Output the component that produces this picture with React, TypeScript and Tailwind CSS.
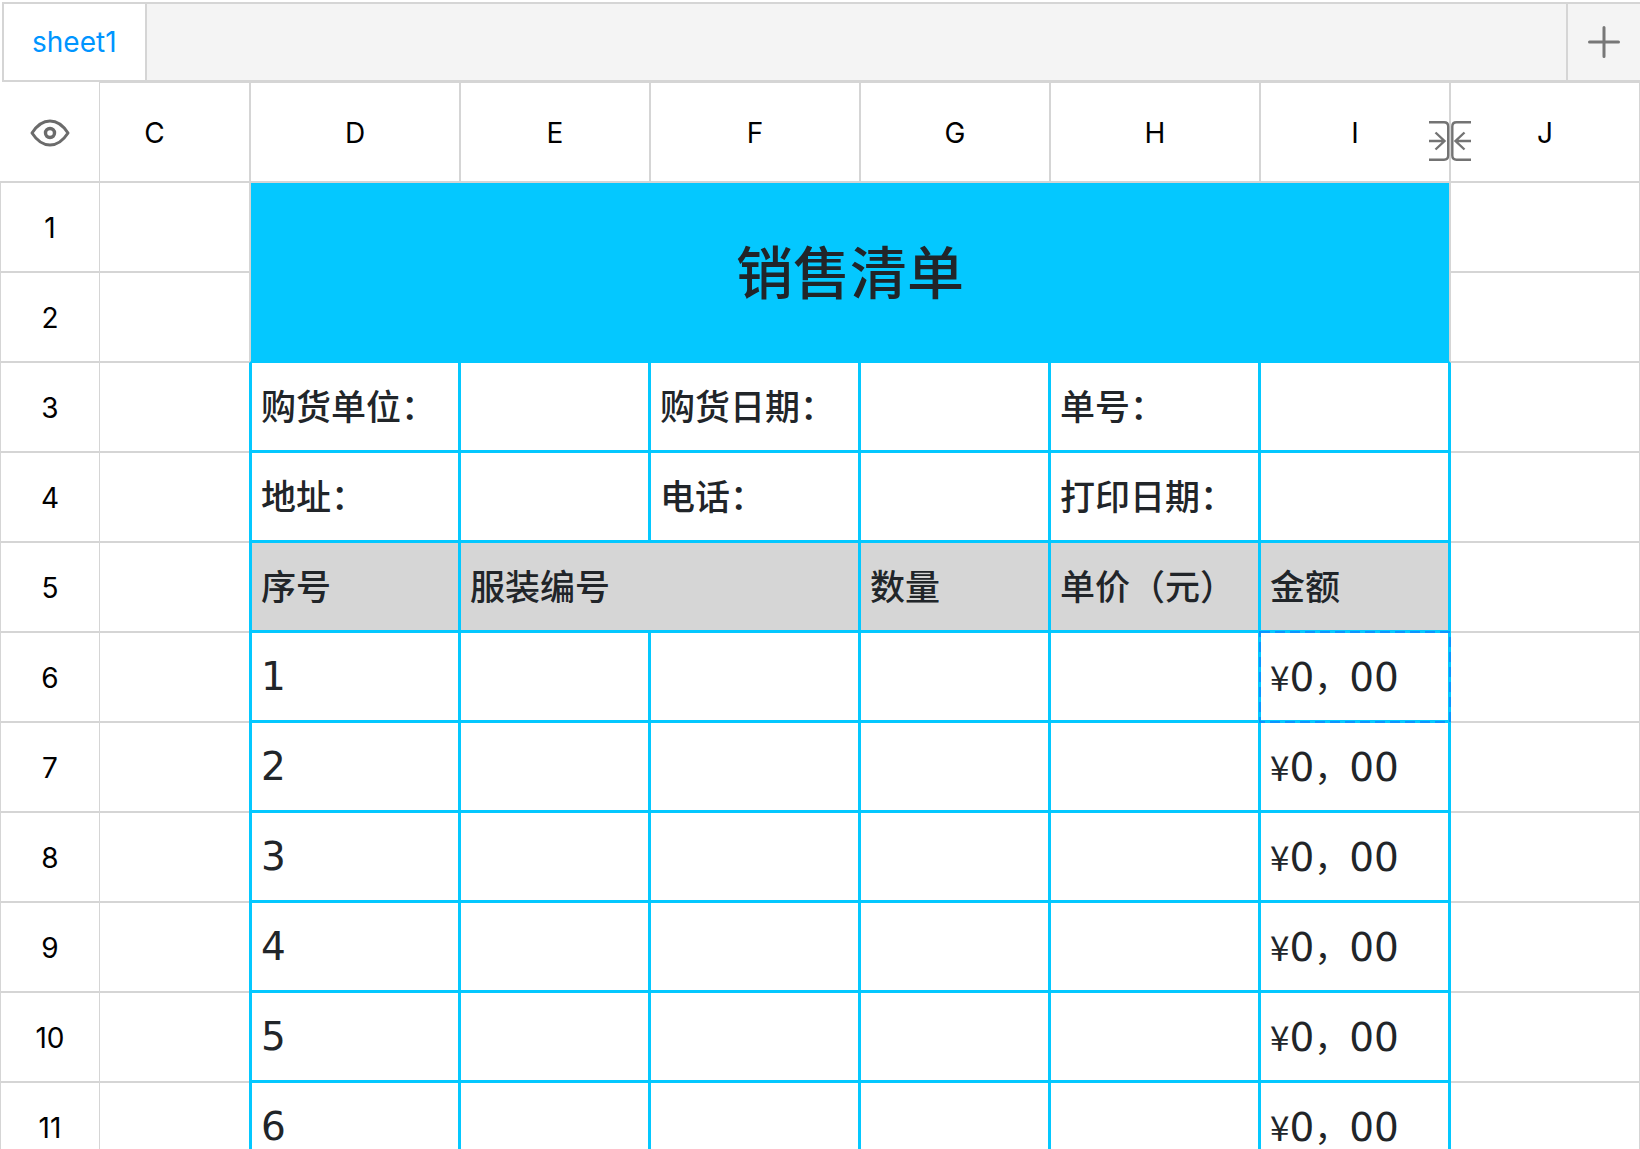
const columns = ["C", "D", "E", "F", "G", "H", "I", "J"];

const items = [1, 2, 3, 4, 5, 6];

const label =
  "border-r-[3px] border-b-[3px] border-[#04c8ff] p-0 pb-1 pl-[9px] text-left text-[35px] leading-10 font-medium whitespace-nowrap";
const head = `${label} bg-[#d6d6d6]`;
const cell =
  "relative border-r-[3px] border-b-[3px] border-[#04c8ff] p-0 pl-[9px] whitespace-nowrap";
const edge = "border-b-2 border-[#d5d5d5]";

function EyeIcon() {
  return (
    <svg width="40" height="28" viewBox="0 0 40 28" fill="none" stroke="#6b6b6b" strokeWidth="3">
      <path
        d="M2 14C6.500 7 12.500 2 20 2s13.500 5 18 12c-4.500 7-10.500 12-18 12S6.500 21 2 14Z"
        strokeLinejoin="round"
      />
      <circle cx="20" cy="14" r="4.500" strokeWidth="3.400" />
    </svg>
  );
}

function PlusIcon() {
  return (
    <svg width="32" height="32" viewBox="0 0 32 32" stroke="#777777" strokeWidth="3" strokeLinecap="round">
      <path d="M1.500 16h29M16 1.500v29" />
    </svg>
  );
}

function CollapseIcon() {
  return (
    <svg width="42" height="40" viewBox="0 0 42 40" fill="none" stroke="#737373" strokeWidth="2.400">
      <path d="M0 1.200H15Q19.200 1.200 19.200 5.400V34.600Q19.200 38.800 15 38.800H0" />
      <path d="M42 1.200H27.500Q23.300 1.200 23.300 5.400V34.600Q23.300 38.800 27.500 38.800H42" />
      <path d="M0 20H15.500M6.500 11.500L15.500 20L6.500 28.500" />
      <path d="M42 20H26.500M35.500 11.500L26.500 20L35.500 28.500" />
    </svg>
  );
}

function RowNumber({ n }: { n: number }) {
  return (
    <th
      scope="row"
      className="border-r border-b-2 border-l border-[#d5d5d5] p-0 pt-0.5 text-center font-['Inter',sans-serif] text-[28px] font-normal text-black"
    >
      {n}
    </th>
  );
}

function Amount() {
  return (
    <span className="flex items-baseline text-[35px] leading-10">
      ¥<span className="font-['DejaVu_Sans',sans-serif] text-[39px]">0</span>，
      <span className="font-['DejaVu_Sans',sans-serif] text-[39px]">00</span>
    </span>
  );
}

export default function App() {
  return (
    <div className="h-screen overflow-hidden bg-white pt-0.5 font-['Noto_Sans_CJK_SC',sans-serif] text-[#212529]">
      <div className="ml-0.5 flex h-20 border-y-2 border-l-2 border-[#d5d5d5] bg-[#f4f4f4] font-['Inter',sans-serif]">
        <button className="border-r-2 border-[#d5d5d5] bg-white px-7 text-[28px] text-[#0095ff]">
          sheet1
        </button>
        <button
          aria-label="Add sheet"
          className="ml-auto flex w-[74px] items-center justify-center border-l-2 border-[#d5d5d5]"
        >
          <PlusIcon />
        </button>
      </div>

      <table className="w-full table-fixed border-separate border-spacing-0">
        <colgroup>
          <col className="w-[100px]" />
          <col className="w-[149px]" />
          <col className="w-[212px]" />
          <col className="w-[190px]" />
          <col className="w-[210px]" />
          <col className="w-[190px]" />
          <col className="w-[210px]" />
          <col className="w-[190px]" />
          <col />
        </colgroup>
        <thead>
          <tr className="h-[101px] font-['Inter',sans-serif] text-[28px] text-black">
            <th className="border-r border-b-2 border-[#d5d5d5] p-0 pt-0.5">
              <button aria-label="Show hidden" className="flex w-full justify-center">
                <EyeIcon />
              </button>
            </th>
            {columns.map((name) => (
              <th
                key={name}
                scope="col"
                className={`relative border-t border-b-2 border-[#d5d5d5] p-0 pt-0.5 font-normal ${
                  name === "C" ? "pr-10" : name === "J" ? "border-r" : "border-r-2"
                } ${name === "D" ? "border-l-2" : ""}`}
              >
                {name}
                {name === "I" && (
                  <button
                    aria-label="Hidden columns"
                    className="absolute top-[38px] -right-[22px] z-10"
                  >
                    <CollapseIcon />
                  </button>
                )}
              </th>
            ))}
          </tr>
        </thead>
        <tbody>
          <tr className="h-[90px]">
            <RowNumber n={1} />
            <td className={edge} />
            <td
              colSpan={6}
              rowSpan={2}
              className="border-x-2 border-b-2 border-x-[#d5d5d5] border-b-[#04c8ff] bg-[#04c8ff] bg-clip-padding p-0 pb-1.5 text-center text-[57px] leading-[64px] font-medium"
            >
              销售清单
            </td>
            <td className={`${edge} border-r`} />
          </tr>
          <tr className="h-[90px]">
            <RowNumber n={2} />
            <td className={edge} />
            <td className={`${edge} border-r`} />
          </tr>
          <tr className="h-[90px]">
            <RowNumber n={3} />
            <td className={edge} />
            <td className={`${label} border-l-[3px]`}>购货单位：</td>
            <td className={cell} />
            <td className={label}>购货日期：</td>
            <td className={cell} />
            <td className={label}>单号：</td>
            <td className={cell} />
            <td className={`${edge} border-r`} />
          </tr>
          <tr className="h-[90px]">
            <RowNumber n={4} />
            <td className={edge} />
            <td className={`${label} border-l-[3px]`}>地址：</td>
            <td className={cell} />
            <td className={label}>电话：</td>
            <td className={cell} />
            <td className={label}>打印日期：</td>
            <td className={cell} />
            <td className={`${edge} border-r`} />
          </tr>
          <tr className="h-[90px]">
            <RowNumber n={5} />
            <td className={edge} />
            <th className={`${head} border-l-[3px]`}>序号</th>
            <th colSpan={2} className={head}>
              服装编号
            </th>
            <th className={head}>数量</th>
            <th className={head}>单价（元）</th>
            <th className={head}>金额</th>
            <td className={`${edge} border-r`} />
          </tr>
          {items.map((n) => (
            <tr key={n} className="h-[90px]">
              <RowNumber n={n + 5} />
              <td className={edge} />
              <td className={`${cell} border-l-[3px] font-['DejaVu_Sans',sans-serif] text-[39px] leading-10`}>
                {n}
              </td>
              <td className={cell} />
              <td className={cell} />
              <td className={cell} />
              <td className={cell} />
              <td className={cell}>
                <Amount />
                {n === 1 && (
                  <svg className="absolute -top-0.5 -left-0.5 h-[92px] w-48" viewBox="0 0 192 92" fill="none">
                    <rect
                      x="1"
                      y="1"
                      width="190"
                      height="90"
                      stroke="#0a95ff"
                      strokeWidth="2"
                      strokeDasharray="10 5"
                    />
                  </svg>
                )}
              </td>
              <td className={`${edge} border-r`} />
            </tr>
          ))}
        </tbody>
      </table>
    </div>
  );
}
